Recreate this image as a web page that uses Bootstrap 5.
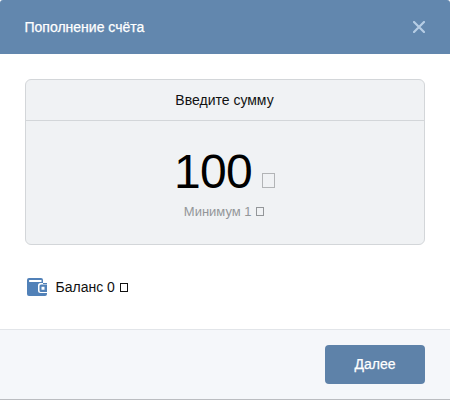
<!DOCTYPE html>
<html lang="ru">
<head>
<meta charset="utf-8">
<meta name="viewport" content="width=device-width, initial-scale=1">
<title>Пополнение счёта</title>
<link href="https://cdn.jsdelivr.net/npm/bootstrap@5.3.0/dist/css/bootstrap.min.css" rel="stylesheet">
<style>
body{font-family:"Liberation Sans",Arial,sans-serif;font-size:14px;line-height:18px;color:#111;background:#fff;overflow:hidden}
.pay-box{width:450px;height:400px;border-bottom:1px solid #bbbdc1}
.pay-head{height:54px;background:#6287ae;border-radius:3px 3px 0 0;color:#fff;padding:0 25px 0 24.5px}
.pay-title{-webkit-text-stroke:.25px #fff}
.pay-close{width:12px;height:12px}
.pay-main{padding:25px 25px 0}
.amount{border:1px solid #d3d6d9;border-radius:6px;background:#f0f2f4;height:166px}
.amount-head{height:41px;border-bottom:1px solid #d3d6d9;padding-right:1px}
.amount-body{padding:27px 1px 0 0}
.sum{font-size:48px;line-height:48px;color:#000;letter-spacing:-.7px}
.cur{display:inline-block;border:1px solid currentColor;width:8px;height:9px;margin-left:1px}
.cur-lg{width:13px;height:15px;color:#b2b4b6;margin-left:10px}
.hint{font-size:13px;line-height:16px;color:#939699;margin-top:8px;padding-right:1px}
.balance{margin-top:33px;padding-left:2px;gap:8.5px}
.pay-foot{height:70px;background:#f5f7fa;border-top:1px solid #e2e5e9;padding:15px 25px 0}
.btn-next{width:100px;height:39px;background:#5e82a9;color:#fff;font-size:14px;border-radius:4px;border:0;padding:0;-webkit-text-stroke:.25px #fff}
.btn-next:hover{background:#567ba3;color:#fff}
</style>
</head>
<body>
<div class="pay-box d-flex flex-column">
  <header class="pay-head d-flex align-items-center justify-content-between">
    <span class="pay-title">Пополнение счёта</span>
    <svg class="pay-close" viewBox="0 0 12 12" fill="none" stroke="#b6cde5" stroke-width="2.2" stroke-linecap="round"><path d="M1 1l10 10M11 1L1 11"/></svg>
  </header>
  <main class="pay-main flex-grow-1">
    <div class="amount card text-center">
      <div class="amount-head d-flex align-items-center justify-content-center">Введите сумму</div>
      <div class="amount-body">
        <div class="sum d-flex align-items-baseline justify-content-center"><span>100</span><span class="cur cur-lg"></span></div>
        <div class="hint">Минимум 1 <span class="cur"></span></div>
      </div>
    </div>
    <div class="balance d-flex align-items-center">
      <svg width="20" height="18" viewBox="0 0 20 18">
        <path fill="#5181b8" d="M2 0H14Q16 0 16 2V5H20V16Q20 18 18 18H2Q0 18 0 16V2Q0 0 2 0z"/>
        <path fill="#fff" d="M16 0H20V6H16zM2.500 2H14.500V4H2.500Q2 4 2 3T2.500 2zM20 5H13.500Q11 5 11 7.500V12.500Q11 15 13.500 15H20z"/>
        <path fill="#5181b8" fill-rule="evenodd" d="M14 6.500H20V14H14Q12.500 14 12.500 12.500V8Q12.500 6.500 14 6.500zM14.500 8.800V11.800H17.500V8.800z"/>
      </svg>
      <span>Баланс 0 <span class="cur"></span></span>
    </div>
  </main>
  <footer class="pay-foot d-flex justify-content-end align-items-start">
    <button type="button" class="btn btn-next">Далее</button>
  </footer>
</div>
<script src="https://cdn.jsdelivr.net/npm/bootstrap@5.3.0/dist/js/bootstrap.bundle.min.js"></script>
</body>
</html>
